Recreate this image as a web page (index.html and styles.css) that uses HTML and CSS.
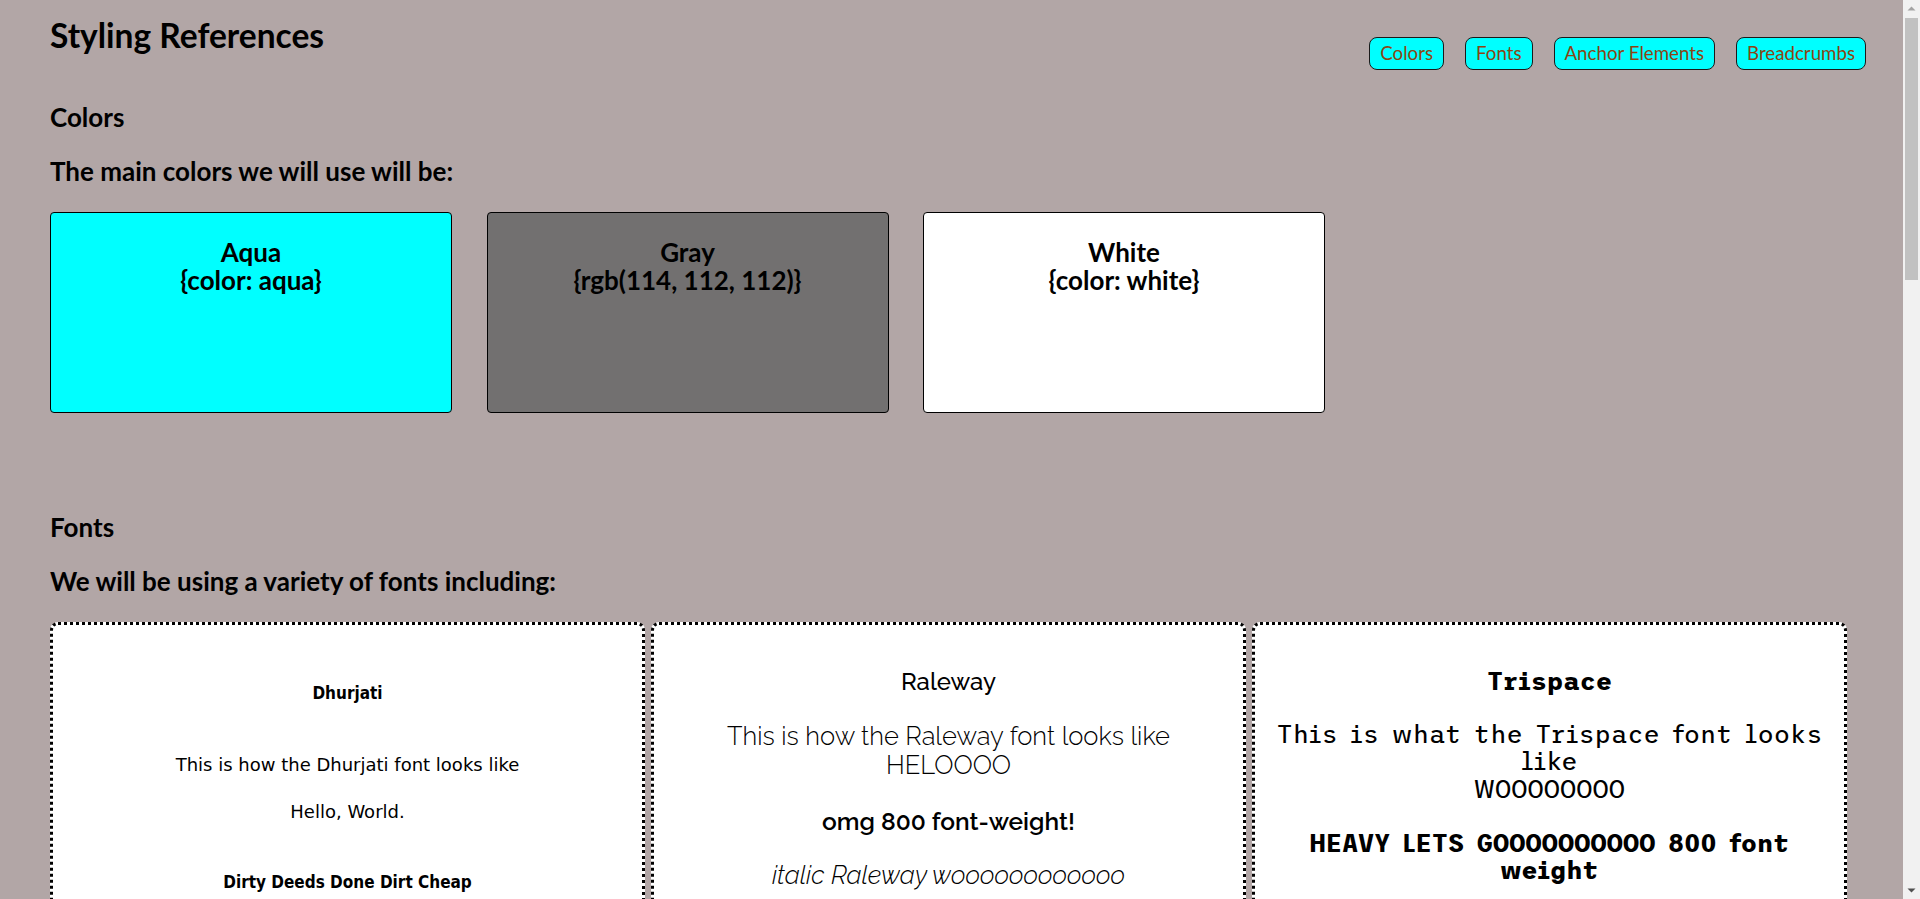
FILE: index.html
```html
<!DOCTYPE html>
<html lang="en">
<head>
<meta charset="utf-8">
<title>Styling References</title>
<link rel="stylesheet" href="styles.css">
</head>
<body>
<div class="page">
  <header class="top">
    <h1 class="title">Styling References</h1>
    <nav class="jump">
      <a class="jump-btn" href="#colors">Colors</a>
      <a class="jump-btn" href="#fonts">Fonts</a>
      <a class="jump-btn" href="#anchors">Anchor Elements</a>
      <a class="jump-btn" href="#crumbs">Breadcrumbs</a>
    </nav>
  </header>

  <section id="colors" class="block">
    <h2 class="sec-title">Colors</h2>
    <h2 class="sec-lead">The main colors we will use will be:</h2>
    <div class="swatches">
      <div class="swatch swatch-aqua">
        <div class="swatch-name">Aqua</div>
        <div class="swatch-name">{color: aqua}</div>
      </div>
      <div class="swatch swatch-gray">
        <div class="swatch-name">Gray</div>
        <div class="swatch-name">{rgb(114, 112, 112)}</div>
      </div>
      <div class="swatch swatch-white">
        <div class="swatch-name">White</div>
        <div class="swatch-name">{color: white}</div>
      </div>
    </div>
  </section>

  <section id="fonts" class="block block-fonts">
    <h2 class="sec-title">Fonts</h2>
    <h2 class="sec-lead">We will be using a variety of fonts including:</h2>
    <div class="cards">
      <div class="card card-dh">
        <h3 class="dh-head">Dhurjati</h3>
        <p class="dh-text">This is how the Dhurjati font looks like</p>
        <p class="dh-text dh-hello">Hello, World.</p>
        <h3 class="dh-big">Dirty Deeds Done Dirt Cheap</h3>
        <p class="dh-text dh-more">Used for playful accents and small labels.</p>
      </div>
      <div class="card card-ra">
        <h3 class="ra-head">Raleway</h3>
        <p class="ra-text ra-first">This is how the Raleway font looks like<br>HELOOOO</p>
        <p class="ra-text ra-heavy">omg 800 font-weight!</p>
        <p class="ra-text ra-italic">italic Raleway woooooooooooo</p>
        <p class="ra-text ra-more">Used for body copy and paragraphs.</p>
      </div>
      <div class="card card-tr">
        <h3 class="tr-head">Trispace</h3>
        <p class="tr-text">This is what the Trispace font looks like<br>WOOOOOOOO</p>
        <p class="tr-text tr-heavy">HEAVY LETS GOOOOOOOOOO 800 font weight</p>
        <p class="tr-text tr-more">Used for code samples.</p>
      </div>
    </div>
  </section>

  <section id="anchors" class="block block-tall">
    <h2 class="sec-title">Anchor Elements</h2>
    <h2 class="sec-lead">Links will look like this:</h2>
    <p class="demo-links"><a class="jump-btn" href="#colors">Example Link</a></p>
  </section>

  <section id="crumbs" class="block block-tall">
    <h2 class="sec-title">Breadcrumbs</h2>
    <h2 class="sec-lead">Breadcrumbs will look like this:</h2>
    <p class="crumb-row">Home / Styling References / Breadcrumbs</p>
  </section>
</div>

<div class="fake-scroll" aria-hidden="true">
  <div class="fs-btn">
    <svg width="17" height="17" viewBox="0 0 17 17"><path d="M4.5 10.5 L8.5 6.5 L12.5 10.5 Z" fill="#a3a3a3"/></svg>
  </div>
  <div class="fs-track"><div class="fs-thumb"></div></div>
  <div class="fs-btn">
    <svg width="17" height="17" viewBox="0 0 17 17"><path d="M4.5 6.5 L8.5 10.5 L12.5 6.5 Z" fill="#505050"/></svg>
  </div>
</div>
</body>
</html>
```

FILE: styles.css
```css
html, body {
  margin: 0;
  padding: 0;
}

body {
  background: #b2a6a6;
  color: #000;
  font-family: "Gill Sans", "Gill Sans MT", Lato, "Noto Sans", sans-serif;
}

.page {
  padding: 0 0 0 50px;
}

.top {
  width: 1816px;
  display: flex;
  justify-content: space-between;
  align-items: flex-start;
}

.title {
  margin: 14.5px 0 0;
  font-size: 33.5px;
  line-height: 40px;
  font-weight: 700;
}

.jump {
  display: flex;
  gap: 21px;
  margin-top: 37px;
}

.jump-btn {
  display: inline-block;
  height: 33px;
  box-sizing: border-box;
  padding: 0 10px;
  border: 1px solid #1a1a1a;
  border-radius: 8px;
  background: #00ffff;
  color: #8b4513;
  font-size: 18.7px;
  line-height: 31px;
  text-decoration: none;
}

.block {
  display: flex;
  flex-direction: column;
}

.sec-title,
.sec-lead {
  margin: 0;
  font-size: 26px;
  line-height: 30px;
  font-weight: 700;
}

.sec-title {
  margin-top: 32px;
}

.sec-lead {
  margin-top: 24px;
}

.block-fonts .sec-title {
  margin-top: 99px;
}

.swatches {
  display: flex;
  gap: 34.5px;
  margin-top: 26px;
}

.swatch {
  width: 402px;
  height: 201px;
  box-sizing: border-box;
  border: 1px solid #000;
  border-radius: 4px;
  padding-top: 25px;
  text-align: center;
}

.swatch-name {
  font-size: 26px;
  line-height: 28px;
  font-weight: 700;
}

.swatch-aqua { background: #00ffff; }
.swatch-gray { background: rgb(114, 112, 112); }
.swatch-white { background: #fff; }

.cards {
  display: flex;
  gap: 6px;
  margin-top: 26px;
}

.card {
  width: 595px;
  min-height: 420px;
  box-sizing: border-box;
  background: #fff;
  border: 3px dotted #000;
  border-radius: 8px;
  padding: 0 20px 30px;
  text-align: center;
}

.card h3,
.card p {
  margin: 0;
}

/* Dhurjati card */
.card-dh {
  font-family: "DejaVu Sans", sans-serif;
}

.dh-head {
  margin-top: 58px !important;
  font-family: "DejaVu Sans Condensed", "DejaVu Sans", sans-serif;
  font-stretch: condensed;
  font-size: 17px;
  line-height: 20px;
  font-weight: 700;
}

.dh-text {
  font-size: 18px;
  line-height: 20px;
  margin-top: 52px !important;
}

.dh-hello {
  margin-top: 27px !important;
}

.dh-big {
  margin-top: 49px !important;
  font-family: "DejaVu Sans Condensed", "DejaVu Sans", sans-serif;
  font-stretch: condensed;
  font-size: 17px;
  line-height: 22px;
  font-weight: 700;
}

.dh-more {
  margin-top: 40px !important;
}

/* Raleway card */
.card-ra {
  font-family: Raleway, Lato, sans-serif;
}

.ra-head {
  margin-top: 42px !important;
  font-size: 24px;
  line-height: 29px;
  font-weight: 500;
}

.ra-text {
  margin-top: 25.5px !important;
  font-size: 25.5px;
  line-height: 29px;
  font-weight: 300;
}

.ra-heavy {
  margin-top: 27.4px !important;
  font-size: 24.5px;
  font-weight: 600;
}

.ra-italic {
  font-style: italic;
}

/* Trispace card */
.card-tr {
  font-family: Trispace, "Liberation Mono", "DejaVu Sans Mono", monospace;
}

.tr-head {
  margin-top: 43px !important;
  font-size: 25px;
  line-height: 27.5px;
  font-weight: 700;
}

.tr-text {
  margin-top: 25px !important;
  font-size: 25px;
  line-height: 27.5px;
}

.tr-heavy {
  margin-top: 26.5px !important;
  font-weight: 700;
}

.block-tall {
  min-height: 960px;
}

.demo-links,
.crumb-row {
  margin: 26px 0 0;
  font-size: 20px;
}

/* browser scrollbar look-alike */
.fake-scroll {
  position: fixed;
  top: 0;
  right: 0;
  bottom: 0;
  width: 17px;
  display: flex;
  flex-direction: column;
  background: #f1f1f1;
  z-index: 10;
}

.fs-btn {
  height: 17px;
  flex: none;
}

.fs-btn svg {
  display: block;
}

.fs-track {
  flex: 1;
  padding: 1px 2px 0;
}

.fs-thumb {
  height: 262px;
  background: #c1c1c1;
}
```
